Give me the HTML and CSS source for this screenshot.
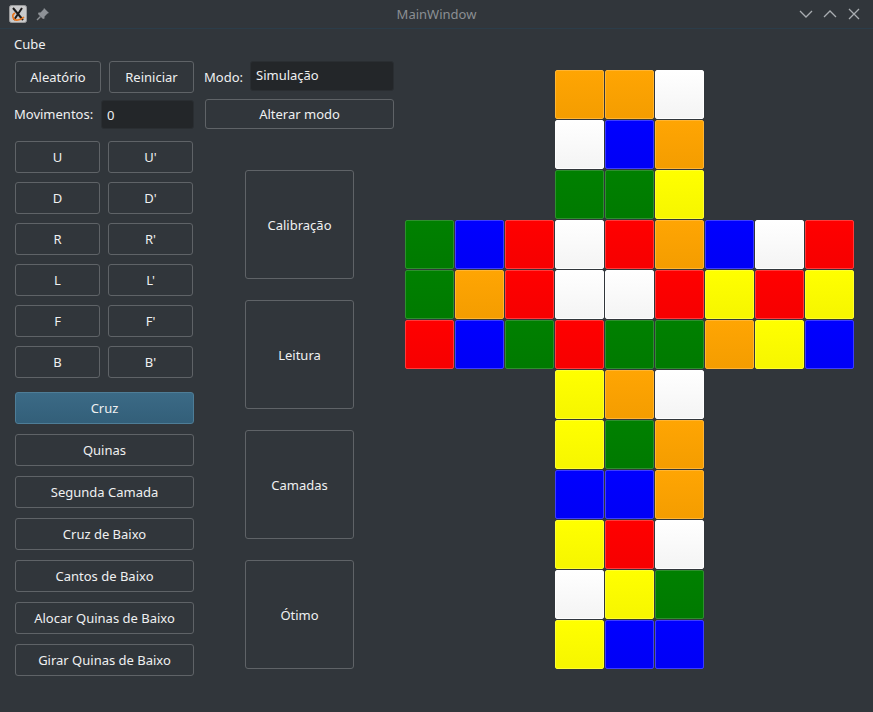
FILE: index.html
```html
<!DOCTYPE html>
<html lang="pt">
<head>
<meta charset="utf-8">
<title>MainWindow</title>
<link rel="stylesheet" href="styles.css">
</head>
<body>
<div class="window">
  <header class="titlebar">
    <div class="tb-left">
      <svg class="app-icon" width="18" height="18" viewBox="0 0 18 18">
        <rect x="0.5" y="0.5" width="17" height="17" rx="2" fill="#c9cacb" stroke="#9a9b9c"/>
        <path d="M4 3 L14 15 M13 3 L5 15" stroke="#1b1b1b" stroke-width="2" fill="none"/>
        <path d="M6 8 C2 10 4 16 9 15 C12 14.5 14 13 15 12" stroke="#e8741c" stroke-width="1.6" fill="none"/>
      </svg>
      <svg class="pin" width="14" height="14" viewBox="0 0 14 14">
        <path d="M8 1 L13 6 L11.5 6.5 L8.5 9.5 L8.5 11.5 L7 12 L2 7 L2.5 5.5 L4.5 5.5 L7.5 2.5 Z" fill="#8d9196"/>
        <path d="M4.5 9.5 L1 13" stroke="#8d9196" stroke-width="1.4"/>
      </svg>
    </div>
    <div class="tb-title">MainWindow</div>
    <div class="tb-controls">
      <svg width="14" height="14" viewBox="0 0 14 14"><path d="M1 4 L7 10 L13 4" stroke="#a9adb1" stroke-width="1.3" fill="none"/></svg>
      <svg width="14" height="14" viewBox="0 0 14 14"><path d="M1 10 L7 4 L13 10" stroke="#a9adb1" stroke-width="1.3" fill="none"/></svg>
      <svg width="14" height="14" viewBox="0 0 14 14"><path d="M2 2 L12 12 M12 2 L2 12" stroke="#a9adb1" stroke-width="1.3" fill="none"/></svg>
    </div>
  </header>

  <main class="main">
    <section class="left">
      <div class="label cube-label">Cube</div>
      <div class="row row1">
        <button class="btn w86">Aleatório</button>
        <button class="btn w85 ml8">Reiniciar</button>
        <span class="label modo">Modo:</span>
        <div class="edit edit-modo">Simulação</div>
      </div>
      <div class="row row2">
        <span class="label movs">Movimentos:</span>
        <div class="edit edit-movs">0</div>
        <button class="btn alterar">Alterar modo</button>
      </div>
      <div class="lower">
        <div class="col-left">
          <div class="moves">
            <button class="btn mv">U</button><button class="btn mv">U'</button>
            <button class="btn mv">D</button><button class="btn mv">D'</button>
            <button class="btn mv">R</button><button class="btn mv">R'</button>
            <button class="btn mv">L</button><button class="btn mv">L'</button>
            <button class="btn mv">F</button><button class="btn mv">F'</button>
            <button class="btn mv">B</button><button class="btn mv">B'</button>
          </div>
          <div class="stages">
            <button class="btn stage active">Cruz</button>
            <button class="btn stage">Quinas</button>
            <button class="btn stage">Segunda Camada</button>
            <button class="btn stage">Cruz de Baixo</button>
            <button class="btn stage">Cantos de Baixo</button>
            <button class="btn stage">Alocar Quinas de Baixo</button>
            <button class="btn stage">Girar Quinas de Baixo</button>
          </div>
        </div>
        <div class="col-right">
          <button class="btn big">Calibração</button>
          <button class="btn big">Leitura</button>
          <button class="btn big">Camadas</button>
          <button class="btn big">Ótimo</button>
        </div>
      </div>
    </section>

    <section class="cube">
      <i class="e"></i><i class="e"></i><i class="e"></i><i class="c o"></i><i class="c o"></i><i class="c w"></i><i class="e"></i><i class="e"></i><i class="e"></i>
      <i class="e"></i><i class="e"></i><i class="e"></i><i class="c w"></i><i class="c b"></i><i class="c o"></i><i class="e"></i><i class="e"></i><i class="e"></i>
      <i class="e"></i><i class="e"></i><i class="e"></i><i class="c g"></i><i class="c g"></i><i class="c y"></i><i class="e"></i><i class="e"></i><i class="e"></i>
      <i class="c g"></i><i class="c b"></i><i class="c r"></i><i class="c w"></i><i class="c r"></i><i class="c o"></i><i class="c b"></i><i class="c w"></i><i class="c r"></i>
      <i class="c g"></i><i class="c o"></i><i class="c r"></i><i class="c w"></i><i class="c w"></i><i class="c r"></i><i class="c y"></i><i class="c r"></i><i class="c y"></i>
      <i class="c r"></i><i class="c b"></i><i class="c g"></i><i class="c r"></i><i class="c g"></i><i class="c g"></i><i class="c o"></i><i class="c y"></i><i class="c b"></i>
      <i class="e"></i><i class="e"></i><i class="e"></i><i class="c y"></i><i class="c o"></i><i class="c w"></i><i class="e"></i><i class="e"></i><i class="e"></i>
      <i class="e"></i><i class="e"></i><i class="e"></i><i class="c y"></i><i class="c g"></i><i class="c o"></i><i class="e"></i><i class="e"></i><i class="e"></i>
      <i class="e"></i><i class="e"></i><i class="e"></i><i class="c b"></i><i class="c b"></i><i class="c o"></i><i class="e"></i><i class="e"></i><i class="e"></i>
      <i class="e"></i><i class="e"></i><i class="e"></i><i class="c y"></i><i class="c r"></i><i class="c w"></i><i class="e"></i><i class="e"></i><i class="e"></i>
      <i class="e"></i><i class="e"></i><i class="e"></i><i class="c w"></i><i class="c y"></i><i class="c g"></i><i class="e"></i><i class="e"></i><i class="e"></i>
      <i class="e"></i><i class="e"></i><i class="e"></i><i class="c y"></i><i class="c b"></i><i class="c b"></i><i class="e"></i><i class="e"></i><i class="e"></i>
    </section>
  </main>
</div>
</body>
</html>
```
FILE: styles.css
```css
* { box-sizing: border-box; }
html, body {
  margin: 0;
  padding: 0;
  background: #31363b;
  font-family: "Noto Sans", "DejaVu Sans", sans-serif;
  font-size: 13px;
  color: #eff0f1;
}
.window {
  width: 873px;
  height: 712px;
  overflow: hidden;
}
.titlebar {
  height: 29px;
  border-bottom: 1px solid #2b3d4a;
  display: grid;
  grid-template-columns: 1fr auto 1fr;
  align-items: center;
}
.tb-left {
  display: flex;
  align-items: center;
  padding-left: 9px;
  gap: 9px;
}
.app-icon { display: block; margin-top: -1px; }
.pin { display: block; }
.tb-title {
  text-align: center;
  color: #8b8f93;
  font-size: 13px;
  margin-top: -1px;
}
.tb-controls {
  display: flex;
  align-items: center;
  justify-content: flex-end;
  gap: 10px;
  padding-right: 12px;
}
.tb-controls svg { display: block; }

.main {
  display: flex;
  padding: 8px 0 0 15px;
}
.left { width: 380px; }
.label { color: #eff0f1; }
.cube-label {
  height: 15px;
  line-height: 15px;
  margin-left: -1px;
}
.row { display: flex; align-items: center; }
.row1 { margin-top: 9px; height: 31px; }
.row2 { margin-top: 7px; height: 30px; }

.btn {
  font-family: inherit;
  font-size: 13px;
  color: #eff0f1;
  background: #31363b;
  border: 1px solid #5f6367;
  border-radius: 3px;
  padding: 0;
  margin: 0;
  height: 32px;
}
.w86 { width: 86px; }
.w85 { width: 85px; }
.ml8 { margin-left: 8px; }
.modo { margin-left: 10px; width: 46px; }
.edit {
  background: #232629;
  border: 1px solid #2a2e32;
  border-radius: 3px;
  color: #eff0f1;
  padding-left: 5px;
  display: flex;
  align-items: center;
}
.edit-modo { width: 144px; height: 30px; margin-top: -2px; padding-bottom: 2px; }
.movs { margin-left: -1px; width: 87px; }
.edit-movs { width: 93px; height: 29px; margin-top: 1px; }
.alterar { width: 189px; height: 30px; margin-left: 11px; }

.lower {
  display: flex;
  margin-top: 12px;
}
.col-left { width: 179px; }
.moves {
  display: grid;
  grid-template-columns: 85px 85px;
  column-gap: 8px;
  row-gap: 9px;
}
.mv { width: 85px; height: 32px; }
.stages {
  display: flex;
  flex-direction: column;
  gap: 10px;
  margin-top: 14px;
}
.stage { width: 179px; height: 32px; }
.stage.active {
  background: linear-gradient(to bottom, #3b6a86, #335f79);
  border-color: #4e7d97;
}
.col-right {
  margin-left: 51px;
  padding-top: 29px;
  display: flex;
  flex-direction: column;
  gap: 21px;
}
.big { width: 109px; height: 109px; }

.cube {
  margin-left: 10px;
  margin-top: 33px;
  display: grid;
  grid-template-columns: repeat(9, 49px);
  grid-auto-rows: 49px;
  gap: 1px;
}
.cube i { display: block; }
.c {
  border-radius: 2px;
  border: 1px solid rgba(255,255,255,0.22);
}
.o { background: linear-gradient(to bottom, #ffa503, #f49d00); border-color: #ffb533; }
.w { background: linear-gradient(to bottom, #ffffff, #f4f4f4); border-color: #ffffff; }
.b { background: linear-gradient(to bottom, #0000ff, #0000f6); border-color: #3d3dff; }
.g { background: linear-gradient(to bottom, #008000, #007a00); border-color: #2f8f2f; }
.y { background: linear-gradient(to bottom, #ffff00, #f6f600); border-color: #ffff30; }
.r { background: linear-gradient(to bottom, #ff0000, #f60000); border-color: #ff3a3a; }
```
